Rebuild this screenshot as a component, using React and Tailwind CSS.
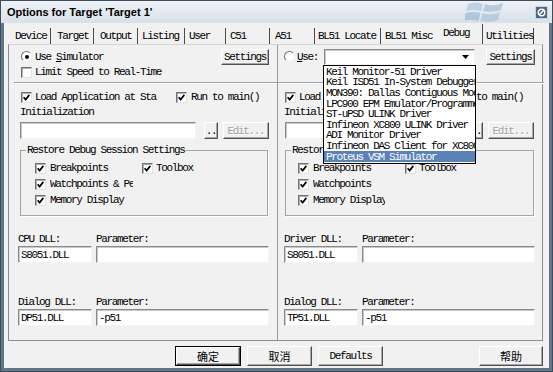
import React from 'react';

const tabs = [
  ['Device', 'w-[43px] pl-[7px] h-[16px] items-center border-r'],
  ['Target', 'w-[43px] pl-[6px] h-[16px] items-center border-r'],
  ['Output', 'w-[44px] pl-[6px] h-[16px] items-center border-r'],
  ['Listing', 'w-[47px] pl-[4px] h-[16px] items-center border-r'],
  ['User', 'w-[41px] pl-[4px] h-[16px] items-center border-r'],
  ['C51', 'w-[44px] pl-[4px] h-[16px] items-center border-r'],
  ['A51', 'w-[45px] pl-[5px] h-[16px] items-center border-r'],
  ['BL51 Locate', 'w-[66px] pl-[3px] h-[16px] items-center border-r'],
  ['BL51 Misc', 'w-[59px] pl-[4px] h-[16px] items-center'],
  ['Debug', 'w-[43px] pl-[3px] h-[20px] items-start pt-[3px] border-r'],
  ['Utilities', 'w-[51px] pl-[3px] h-[16px] items-center border-r'],
];

const drivers = [
  'Keil Monitor-51 Driver',
  'Keil ISD51 In-System Debugger',
  'MON390: Dallas Contiguous Mode',
  'LPC900 EPM Emulator/Programmer',
  'ST-uPSD ULINK Driver',
  'Infineon XC800 ULINK Driver',
  'ADI Monitor Driver',
  'Infineon DAS Client for XC800',
  'Proteus VSM Simulator',
];

function Check({ checked = true }) {
  return (
    <span className="w-[11px] h-[11px] shrink-0 bg-white border border-t-[#6f6f6f] border-l-[#6f6f6f] border-r-[#e2e2e2] border-b-[#e2e2e2] shadow-[inset_1px_1px_0_#b0b0b0] flex items-center justify-center">
      {checked && (
        <svg width="7" height="7" viewBox="0 0 7 7">
          <path d="M0.6 3.2 L2.6 5.6 L6.4 0.9" stroke="#000" strokeWidth="1.7" fill="none" />
        </svg>
      )}
    </span>
  );
}

function Radio({ on }) {
  return (
    <span className="w-[11px] h-[11px] shrink-0 rounded-full bg-white border border-t-[#6f6f6f] border-l-[#6f6f6f] border-r-[#eeeeee] border-b-[#eeeeee] flex items-center justify-center">
      {on && <span className="w-[4px] h-[4px] rounded-full bg-black" />}
    </span>
  );
}

function Btn({ children, className = '', disabled }) {
  return (
    <div
      className={`flex items-center justify-center bg-[#f1f1f1] border border-t-white border-l-white border-r-[#505050] border-b-[#505050] shadow-[inset_-1px_-1px_0_#a8a8a8] ${
        disabled ? 'text-[#a3a3a3] [text-shadow:1px_1px_0_#fff]' : 'text-black'
      } ${className}`}
    >
      {children}
    </div>
  );
}

function Field({ children, className = '' }) {
  return (
    <div className={`bg-white border border-t-[#8a8a8a] border-l-[#8a8a8a] border-r-[#f4f4f4] border-b-[#f4f4f4] shadow-[inset_1px_1px_0_#c8c8c8] flex items-center pl-[2px] whitespace-nowrap overflow-hidden ${className}`}>
      {children}
    </div>
  );
}

function Restore({ pad, width, clip, watch }) {
  return (
    <fieldset className={`mt-[5px] h-[72px] border border-[#a4a4a4] shadow-[1px_1px_0_#fff] ${width}`}>
      <legend className="ml-[5px] px-[1px] leading-[12px]">Restore Debug Session Settings</legend>
      <div className={`grid grid-cols-[107px_auto] gap-y-[4px] pt-[6px] ${pad}`}>
        <div className="h-[12px] flex items-center gap-[4px]"><Check /><span className={`${clip} overflow-hidden whitespace-nowrap`}>Breakpoints</span></div>
        <div className="h-[12px] flex items-center gap-[3px]"><Check /><span>Toolbox</span></div>
        <div className="h-[12px] flex items-center gap-[4px] col-span-2"><Check /><span className={`${clip} overflow-hidden whitespace-nowrap`}>{watch}</span></div>
        <div className="h-[12px] flex items-center gap-[4px] col-span-2"><Check /><span className={`${clip} overflow-hidden whitespace-nowrap`}>Memory Display</span></div>
      </div>
    </fieldset>
  );
}

function DllBlock({ label, dll, dlg, shift }) {
  return (
    <div className={`flex flex-col ${shift}`}>
      <div className="mt-[17px] h-[12px] flex items-center">
        <span className="w-[78px]">{label}</span>
        <span>Parameter:</span>
      </div>
      <div className="mt-[1px] h-[17px] flex gap-[4px]">
        <Field className="w-[74px]">{dll}</Field>
        <Field className="w-[173px]"></Field>
      </div>
      <div className="mt-[33px] h-[12px] flex items-center">
        <span className="w-[78px]">Dialog DLL:</span>
        <span>Parameter:</span>
      </div>
      <div className="mt-[1px] h-[17px] flex gap-[4px]">
        <Field className="w-[74px]">{dlg}</Field>
        <Field className="w-[173px]">-p51</Field>
      </div>
    </div>
  );
}

function LeftColumn() {
  return (
    <div className="w-[269px] shrink-0 border-r border-[#9a9a9a] pl-[11px] pr-[8px] pt-[3px] flex flex-col">
      <div className="h-[17px] flex items-center">
        <div className="ml-[1px] flex items-center gap-[3px]">
          <Radio on />
          <span>Use <span className="underline">S</span>imulator</span>
        </div>
        <Btn className="ml-auto w-[48px] h-[16px]">Settings</Btn>
      </div>
      <div className="mt-[1px] h-[12px] ml-[1px] flex items-center gap-[3px]">
        <Check checked={false} />
        <span>Limit Speed to Real-Time</span>
      </div>
      <div className="mt-[4px] h-[2px] -ml-[6px] -mr-[8px] border-t border-[#a0a0a0] border-b border-b-white" />
      <div className="mt-[7px] h-[12px] ml-[1px] flex items-center">
        <div className="w-[155px] flex items-center gap-[3px]"><Check /><span>Load Application at Sta</span></div>
        <div className="flex items-center gap-[4px]"><Check /><span>Run to main()</span></div>
      </div>
      <div className="mt-[3px] h-[12px] flex items-center">Initialization</div>
      <div className="mt-[4px] h-[17px] flex">
        <Field className="w-[176px]"></Field>
        <Btn className="ml-[8px] w-[14px] items-end pb-[1px]">..</Btn>
        <Btn className="ml-[5px] w-[46px]" disabled>Edit...</Btn>
      </div>
      <Restore pad="pl-[14px]" width="w-[248px]" clip="w-[83px]" watch="Watchpoints & Performance Analyzer" />
      <DllBlock label="CPU DLL:" dll="S8051.DLL" dlg="DP51.DLL" shift="-ml-[2px]" />
    </div>
  );
}

function RightColumn() {
  return (
    <div className="flex-1 pl-[7px] pr-[9px] pt-[3px] flex flex-col">
      <div className="h-[17px] flex items-center">
        <div className="w-[40px] -ml-[1px] flex items-center gap-[2px]">
          <Radio />
          <span><span className="underline">U</span>se:</span>
        </div>
        <div className="relative z-10">
          <Field className="w-[151px] h-[16px] justify-end pr-[5px]">
            <svg width="7" height="4" viewBox="0 0 7 4"><path d="M0 0 H7 L3.5 4 Z" fill="#000" /></svg>
          </Field>
          <div className="absolute left-[-1px] top-[16px] w-[153px] bg-white border border-black py-[1px]">
            {drivers.map((d, i) => (
              <div
                key={d}
                className={`h-[10.6px] pl-[2px] flex items-center whitespace-nowrap overflow-hidden ${
                  i === drivers.length - 1 ? 'bg-[#5a82b6] text-white' : 'text-black'
                }`}
              >
                {d}
              </div>
            ))}
          </div>
        </div>
        <Btn className="ml-auto w-[49px] h-[16px]">Settings</Btn>
      </div>
      <div className="mt-[1px] h-[12px]" />
      <div className="mt-[4px] h-[2px] -ml-[7px] -mr-[9px] border-t border-[#a0a0a0] border-b border-b-white" />
      <div className="mt-[7px] h-[12px] flex items-center">
        <div className="w-[155px] flex items-center gap-[3px]"><Check /><span>Load Application at Sta</span></div>
        <div className="flex items-center gap-[4px]"><Check /><span>Run to main()</span></div>
      </div>
      <div className="mt-[3px] h-[12px] -ml-[1px] flex items-center">Initialization</div>
      <div className="mt-[4px] h-[17px] flex">
        <Field className="w-[176px]"></Field>
        <Btn className="ml-[8px] w-[14px] items-end pb-[1px]">..</Btn>
        <Btn className="ml-[5px] w-[46px]" disabled>Edit...</Btn>
      </div>
      <Restore pad="pl-[12px]" width="w-[249px]" clip="w-[72px]" watch="Watchpoints" />
      <DllBlock label="Driver DLL:" dll="S8051.DLL" dlg="TP51.DLL" shift="-ml-[1px]" />
    </div>
  );
}

export default function App() {
  return (
    <div className="w-[553px] h-[372px] border border-[#3e4d5e] flex flex-col bg-[#f1f1f1] text-black overflow-hidden">
      <div className="relative h-[22px] shrink-0 flex items-center bg-linear-to-b from-[#eef2f6] to-[#d8e0e8] font-['Liberation_Sans',sans-serif] text-[11px] font-bold">
        <span className="pl-[6px]">Options for Target 'Target 1'</span>
        <svg className="absolute left-[464px] top-0 opacity-45" width="42" height="22" viewBox="0 0 42 22">
          <path d="M3 3 Q10 0 18 3 L16 10 Q9 8 1 10 Z" fill="#8fb1d4" />
          <path d="M20 3 Q28 6 38 2 L36 9 Q27 12 18 10 Z" fill="#7fa3c9" />
          <path d="M0.5 12 Q8 10 15.5 12 L13.5 20 Q6 18 -1.5 20 Z" fill="#7fa3c9" />
          <path d="M17.5 12 Q26 15 35 11 L33 19 Q25 22 15.5 20 Z" fill="#8fb1d4" />
        </svg>
        <div className="ml-auto mr-[4px] w-[13px] h-[13px] bg-[#4d6884] border border-[#c9d5e2] flex items-center justify-center">
          <svg width="9" height="9" viewBox="0 0 9 9">
            <circle cx="4.5" cy="4.5" r="3.3" stroke="#fff" strokeWidth="1.4" fill="none" />
            <path d="M2 7 L7 2" stroke="#fff" strokeWidth="1.4" />
          </svg>
        </div>
      </div>
      <div className="flex-1 flex flex-col border-l-[3px] border-r-[3px] border-b-[3px] border-[#627589] font-['Liberation_Mono',monospace] text-[11px] leading-[12px] tracking-[-1.35px]">
        <div className="h-[21px] shrink-0 ml-[4px] flex items-end">
          {tabs.map(([label, cls]) => (
            <div key={label} className={`flex shrink-0 border-[#4a4a4a] whitespace-nowrap ${cls}`}>
              {label}
            </div>
          ))}
        </div>
        <div className="ml-[4px] w-[535px] h-[297px] shrink-0 border border-[#8f8f8f] border-t-[#d6d6d6] flex">
          <LeftColumn />
          <RightColumn />
        </div>
        <div className="mt-[5px] h-[20px] flex">
          <div className="ml-[171px] w-[66px] border border-black">
            <Btn className="w-full h-full font-['Noto_Sans_CJK_SC',sans-serif] tracking-normal">确定</Btn>
          </div>
          <Btn className="ml-[6px] w-[65px] font-['Noto_Sans_CJK_SC',sans-serif] tracking-normal">取消</Btn>
          <Btn className="ml-[6px] w-[65px]">Defaults</Btn>
          <Btn className="ml-[96px] w-[64px] font-['Noto_Sans_CJK_SC',sans-serif] tracking-normal">帮助</Btn>
        </div>
      </div>
    </div>
  );
}
